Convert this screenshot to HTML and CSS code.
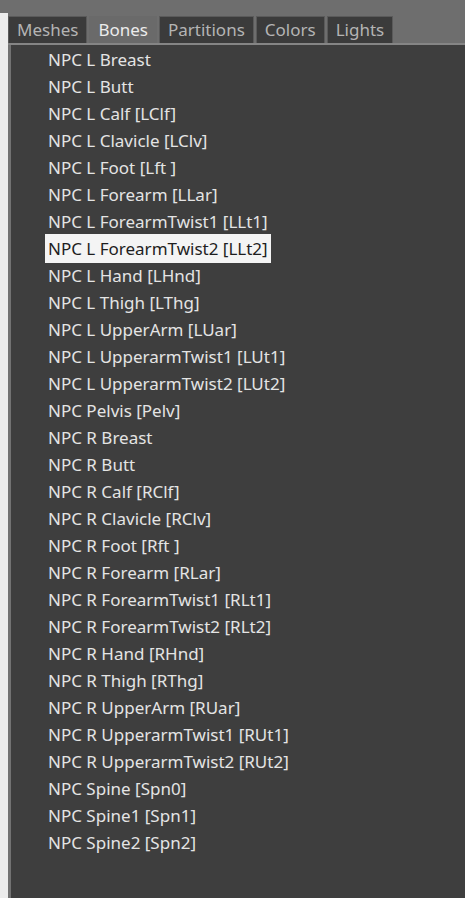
FILE: index.html
```html
<!DOCTYPE html>
<html lang="en">
<head>
    <meta charset="UTF-8">
    <meta name="viewport" content="width=device-width, initial-scale=1.0">
    <title>Bones</title>
    <link rel="stylesheet" href="styles.css">
</head>
<body>
    <div class="window">
        <div class="side"></div>
        <div class="main">
            <div class="tabs">
                <div class="tab">Meshes</div>
                <div class="tab active">Bones</div>
                <div class="tab">Partitions</div>
                <div class="tab">Colors</div>
                <div class="tab">Lights</div>
            </div>
            <div class="panel">
                <ul class="bones">
                    <li><span>NPC L Breast</span></li>
                    <li><span>NPC L Butt</span></li>
                    <li><span>NPC L Calf [LClf]</span></li>
                    <li><span>NPC L Clavicle [LClv]</span></li>
                    <li><span>NPC L Foot [Lft ]</span></li>
                    <li><span>NPC L Forearm [LLar]</span></li>
                    <li><span>NPC L ForearmTwist1 [LLt1]</span></li>
                    <li class="selected"><span>NPC L ForearmTwist2 [LLt2]</span></li>
                    <li><span>NPC L Hand [LHnd]</span></li>
                    <li><span>NPC L Thigh [LThg]</span></li>
                    <li><span>NPC L UpperArm [LUar]</span></li>
                    <li><span>NPC L UpperarmTwist1 [LUt1]</span></li>
                    <li><span>NPC L UpperarmTwist2 [LUt2]</span></li>
                    <li><span>NPC Pelvis [Pelv]</span></li>
                    <li><span>NPC R Breast</span></li>
                    <li><span>NPC R Butt</span></li>
                    <li><span>NPC R Calf [RClf]</span></li>
                    <li><span>NPC R Clavicle [RClv]</span></li>
                    <li><span>NPC R Foot [Rft ]</span></li>
                    <li><span>NPC R Forearm [RLar]</span></li>
                    <li><span>NPC R ForearmTwist1 [RLt1]</span></li>
                    <li><span>NPC R ForearmTwist2 [RLt2]</span></li>
                    <li><span>NPC R Hand [RHnd]</span></li>
                    <li><span>NPC R Thigh [RThg]</span></li>
                    <li><span>NPC R UpperArm [RUar]</span></li>
                    <li><span>NPC R UpperarmTwist1 [RUt1]</span></li>
                    <li><span>NPC R UpperarmTwist2 [RUt2]</span></li>
                    <li><span>NPC Spine [Spn0]</span></li>
                    <li><span>NPC Spine1 [Spn1]</span></li>
                    <li><span>NPC Spine2 [Spn2]</span></li>
                </ul>
            </div>
        </div>
    </div>
</body>
</html>
```

FILE: styles.css
```css
html, body {
    height: 100%;
}
body {
    margin: 0;
    background-color: #6e6e6e;
    font-family: "Noto Sans", "Open Sans", sans-serif;
    overflow: hidden;
}
.window {
    display: flex;
    height: calc(100% - 13px);
    margin-top: 13px;
}
.side {
    width: 8px;
    background-color: #ececec;
}
.main {
    flex: 1;
    display: flex;
    flex-direction: column;
}
.tabs {
    display: flex;
    gap: 2px;
    margin-top: 3px;
    height: 27px;
    border-bottom: 2px solid #858585;
}
.tab {
    padding: 0 8px;
    line-height: 26px;
    font-size: 17px;
    color: #b4b4b4;
    background-color: #3b3b3b;
    border: 1px solid #5a5a5a;
    border-bottom: none;
    box-sizing: border-box;
}
.tab.active {
    background-color: #6a6a6a;
    color: #ececec;
    border-color: #6a6a6a;
}
.panel {
    flex: 1;
    background-color: #3e3e3e;
    border-left: 3px solid #727272;
    padding-top: 1px;
}
.bones {
    list-style: none;
    margin: 0;
    padding: 0 0 0 34px;
}
.bones li {
    height: 27px;
    line-height: 27px;
    font-size: 17px;
    color: #e4e4e4;
    white-space: nowrap;
}
.bones li span {
    padding: 3px 3px;
}
.bones li.selected span {
    background-color: #f4f4f4;
    color: #1e1e1e;
}
```
